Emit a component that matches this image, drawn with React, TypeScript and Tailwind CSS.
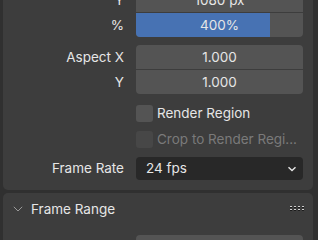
import React from 'react';

const font = { fontFamily: 'Inter, "DejaVu Sans", sans-serif' };

function Label({ children }: { children: React.ReactNode }) {
  return <div className="w-[121px] shrink-0 text-right text-[13.5px] text-[#e6e6e6]">{children}</div>;
}

function Field({ value, first, last, fill }: { value: string; first?: boolean; last?: boolean; fill?: number }) {
  const radius = `${first ? 'rounded-t-[4px]' : ''} ${last ? 'rounded-b-[4px]' : ''}`;
  return (
    <div className={`relative ml-[12px] flex h-[24px] w-[167px] items-center justify-center overflow-hidden bg-[#545454] ${radius}`}>
      {fill !== undefined && <div className="absolute inset-y-0 left-0 bg-[#4772b3]" style={{ width: `${fill}%` }} />}
      <span className="relative text-[13.5px] text-[#e6e6e6]">{value}</span>
    </div>
  );
}

function Checkbox({ label, disabled }: { label: string; disabled?: boolean }) {
  return (
    <div className="flex h-[26px] items-center pl-[133px]">
      <div className={`h-[17px] w-[17px] rounded-[3px] ${disabled ? 'bg-[#474747]' : 'bg-[#545454]'}`} />
      <span className={`ml-[4px] text-[13.5px] ${disabled ? 'text-[#7a7a7a]' : 'text-[#e6e6e6]'}`}>{label}</span>
    </div>
  );
}

function Grip() {
  return (
    <svg width="15" height="7" viewBox="0 0 15 7">
      {[0, 4, 8, 12].map((x) => (
        <g key={x}>
          <rect x={x} y={0} width={2} height={1} fill="#cfcfcf" />
          <rect x={x} y={1} width={2} height={1} fill="#1c1c1c" />
          <rect x={x} y={3} width={2} height={1} fill="#cfcfcf" />
          <rect x={x} y={4} width={2} height={1} fill="#1c1c1c" />
        </g>
      ))}
    </svg>
  );
}

export default function App() {
  return (
    <div className="h-[240px] w-[318px] overflow-hidden bg-[#303030]" style={font}>
      <div className="ml-[3px] mr-[5px] -mt-[12px] rounded-b-[5px] bg-[#3d3d3d] pb-[10px]">
        <div className="flex flex-col gap-[1px]">
          <div className="flex items-center">
            <Label>Y</Label>
            <Field value="1080 px" />
          </div>
          <div className="flex items-center">
            <Label>%</Label>
            <Field value="400%" last fill={80} />
          </div>
        </div>
        <div className="mt-[8px] flex flex-col gap-[1px]">
          <div className="flex items-center">
            <Label>Aspect X</Label>
            <Field value="1.000" first />
          </div>
          <div className="flex items-center">
            <Label>Y</Label>
            <Field value="1.000" last />
          </div>
        </div>
        <div className="mt-[6px]">
          <Checkbox label="Render Region" />
          <Checkbox label="Crop to Render Regi..." disabled />
        </div>
        <div className="mt-[5px] flex items-center">
          <Label>Frame Rate</Label>
          <div className="ml-[12px] flex h-[23px] w-[167px] items-center justify-between rounded-[4px] bg-[#282828] pl-[10px] pr-[6px]">
            <span className="text-[13.5px] text-[#e6e6e6]">24 fps</span>
            <svg width="10" height="6" viewBox="0 0 10 6" fill="none">
              <path d="M1.5 1.2 L5 4.6 L8.5 1.2" stroke="#e6e6e6" strokeWidth="1.4" />
            </svg>
          </div>
        </div>
      </div>
      <div className="ml-[3px] mr-[5px] mt-[3px] rounded-t-[5px] bg-[#3d3d3d]">
        <div className="flex h-[32px] items-center pl-[10px] pr-[8px]">
          <svg width="10" height="6" viewBox="0 0 10 6" fill="none">
            <path d="M0.8 0.8 L5 5 L9.2 0.8" stroke="#9a9a9a" strokeWidth="1" />
          </svg>
          <span className="ml-[8px] text-[13.5px] text-[#e6e6e6]">Frame Range</span>
          <div className="ml-auto">
            <Grip />
          </div>
        </div>
        <div className="flex items-center pt-[10px]">
          <div className="w-[121px]" />
          <div className="ml-[12px] h-[24px] w-[167px] rounded-t-[4px] bg-[#545454]" />
        </div>
      </div>
    </div>
  );
}
